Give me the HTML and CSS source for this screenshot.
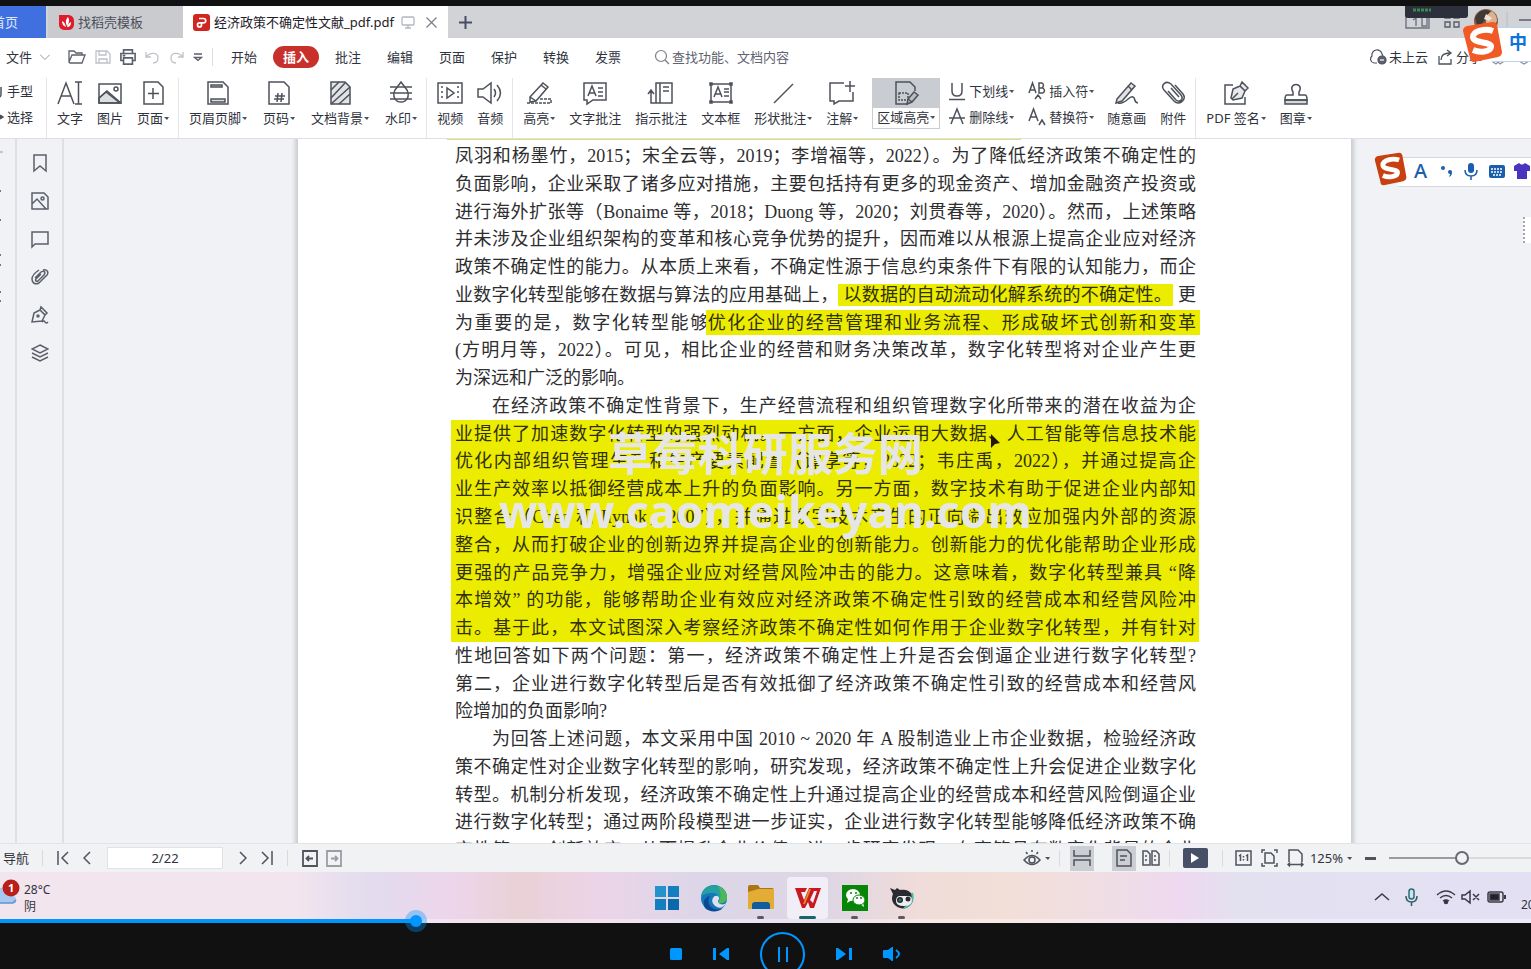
FILE: index.html
```html
<!DOCTYPE html>
<html lang="zh-CN">
<head>
<meta charset="utf-8">
<title>经济政策不确定性文献_pdf.pdf</title>
<link rel="stylesheet" href="styles.css">
</head>
<body>
<div class="player">
  <div class="screen">
    <header class="tabbar">
      <button class="tab tab-home">首页</button>
      <button class="tab tab-tpl">
        <svg width="17" height="17" viewBox="0 0 17 17"><path d="M1 1h10a6 6 0 0 1 5 6v4a6 6 0 0 1-5 5H6a5 5 0 0 1-5-5z" fill="#e01b2c"/><path d="M8 13C5 12 4 10 4 7c2 1 3 2 4 6zM9 12C7 8 8 5 10 3c2 3 1 6-1 9zM9 13c1-3 2-4 4-5 0 3-1 5-4 5z" fill="#fff"/></svg>
        <span>找稻壳模板</span>
      </button>
      <button class="tab tab-doc">
        <svg width="17" height="17" viewBox="0 0 17 17"><rect width="17" height="17" rx="3" fill="#d1251f"/><path d="M6 4.500h4.500a2.200 2.200 0 0 1 0 4.400H6.500a2 2 0 1 0 2 2V8.900" fill="none" stroke="#fff" stroke-width="1.700"/></svg>
        <span class="doc-name">经济政策不确定性文献_pdf.pdf</span>
        <svg class="tab-screen" width="14" height="14" viewBox="0 0 14 14" fill="none" stroke="#b4b6c0" stroke-width="1.300"><rect x="1" y="2" width="12" height="8" rx="1"/><path d="M7 10v2.500M4 13h6"/></svg>
        <svg width="13" height="13" viewBox="0 0 13 13" stroke="#7b7d88" stroke-width="1.200"><path d="M1.500 1.500l10 10M11.500 1.500l-10 10"/></svg>
      </button>
      <button class="tab-add" aria-label="新建"><svg width="13" height="13" viewBox="0 0 13 13" stroke="#484d63" stroke-width="2"><path d="M6.500 0v13M0 6.500h13"/></svg></button>
      <div class="window-tools">
        <svg width="127" height="31" viewBox="0 0 127 31" fill="none">
          <path d="M2 10v12h23V10M12 12v8M9 14l3-2M18 11h5v9h-5z" stroke="#70737e" stroke-width="1.400"/>
          <path d="M41 7h5v5h-5zM50 7h5v5h-5zM41 16h5v5h-5zM50 16h5v5h-5z" stroke="#5a5e6c" stroke-width="1.400"/>
          <path d="M1 0h63v9q0 3-3 3H4q-3 0-3-3z" fill="#2b303c"/><path d="M9 4h18" stroke="#3b8a4c" stroke-width="3" stroke-dasharray="3 1"/>
          <circle cx="82" cy="15" r="12" fill="#8a5b3e"/><path d="M71 12q5-11 15-7l-4 8-8 9z" fill="#3f3a36"/><path d="M82 10l6-5q5 4 5 10l-5 7-6-4z" fill="#d9b391"/><path d="M82 8l6 4-3 3-5-2z" fill="#f1e3d6"/>
          <path d="M103 6v18" stroke="#b9bbc0"/><path d="M115 14h12" stroke="#5a5e6c" stroke-width="1.500"/>
        </svg>
      </div>
    </header>

    <nav class="menubar">
      <button class="menu-file">文件<svg width="10" height="6" viewBox="0 0 10 6" fill="none" stroke="#999"><path d="M0 .5l5 5 5-5"/></svg></button>
      <div class="quick">
        <svg width="18" height="18" viewBox="0 0 18 18"><path d="M1 14V3h5l2 2h6v2M1 14L4 7h13l-3 8H2z"/></svg>
        <svg class="dim" width="16" height="18" viewBox="0 0 16 18"><path d="M1 3h11l3 3v9H1zM4 3v4h7V3M4 15v-4h8v4"/></svg>
        <svg class="print" width="16" height="18" viewBox="0 0 18 18"><path d="M4 5V1h10v4M4 13H1V5h16v8h-3M4 10h10v7H4zM3 7.500h3"/></svg>
        <svg class="dim" width="15" height="18" viewBox="0 0 15 18"><path d="M1 4v5h5M1 9c4-5 12-5 12 1 0 3-2 5-5 5"/></svg>
        <svg class="dim" width="15" height="18" viewBox="0 0 15 18"><path d="M14 4v5H9M14 9C10 4 2 4 2 10c0 3 2 5 5 5"/></svg>
        <svg width="10" height="18" viewBox="0 0 10 18"><path d="M1 6h8M1.500 9.500L5 12.500l3.500-3z"/></svg>
      </div>
      <div class="menu-tabs">
        <button>开始</button><button class="active"><span>插入</span></button><button>批注</button><button>编辑</button><button>页面</button><button>保护</button><button>转换</button><button>发票</button>
      </div>
      <label class="search"><svg width="16" height="16" viewBox="0 0 16 16" fill="none" stroke="#7b7e8a" stroke-width="1.200"><circle cx="7" cy="7" r="5.500"/><path d="M11 11l4 4"/></svg><input type="text" placeholder="查找功能、文档内容" aria-label="查找功能、文档内容"></label>
      <div class="menu-right">
        <button><svg width="18" height="16" viewBox="0 0 18 16" fill="none" stroke="#4d515d" stroke-width="1.200"><path d="M8 14H5A4 4 0 0 1 3 7a5 5 0 0 1 10-2l1 2"/><circle cx="13" cy="11" r="4" fill="#5d6270"/><path d="M11 11h4" stroke="#fff"/></svg>未上云</button>
        <button><svg width="17" height="16" viewBox="0 0 17 16" fill="none" stroke="#4d515d" stroke-width="1.300"><path d="M2 7v8h12v-5M4 11c0-5 3-7 9-7M10 1l4 3-4 3"/></svg>分享</button>
        <svg width="40" height="16" viewBox="0 0 40 16" fill="none" stroke="#8c909b" stroke-width="1.200"><path d="M3 10l-1 3 3 2 2-2 2 2 3-2-1-3M28 10v2l5 3 5-3"/></svg>
      </div>
    </nav>

    <section class="ribbon">
      <div class="col col-first">
        <button><svg width="6" height="14" viewBox="0 0 6 14"><path d="M1 3v7q0 2-1 3"/></svg>手型</button>
        <button><svg width="6" height="14" viewBox="0 0 6 14"><path d="M0 5l3 2-3 2" fill="#444"/></svg>选择</button>
      </div>
      <i class="sep"></i>
      <div class="group">
        <button class="tool"><svg viewBox="0 0 28 28"><path d="M2 25L10 4l8 21M5 17h10M19 3h7M19 25h7M22.500 3v22"/></svg><span>文字</span></button>
        <button class="tool"><svg viewBox="0 0 28 28"><path d="M3 19l7-6 14 11H3z" fill="#dcdee2"/><path d="M3 5h22v19H3zM3 19l8-7 14 12"/><circle cx="20" cy="10" r="2"/></svg><span>图片</span></button>
        <button class="tool"><svg viewBox="0 0 28 28"><path d="M5 3h14l5 5v17H5zM14 9v11M9 14.500h11"/></svg><span class="more">页面</span></button>
      </div>
      <i class="sep"></i>
      <div class="group group-wide">
        <button class="tool"><svg viewBox="0 0 28 28"><path d="M4 3h15l5 5v17H4z"/><path d="M7 6h11v2H7zM7 20h14v3H7z" fill="#dcdee2"/></svg><span class="more">页眉页脚</span></button>
        <button class="tool"><svg viewBox="0 0 28 28"><path d="M4 3h15l5 5v17H4zM10 17h10M9 20h10M13 14l-1 9M17 14l-1 9"/></svg><span class="more">页码</span></button>
        <button class="tool"><svg viewBox="0 0 28 28"><path d="M5 3h14l5 5v17H5z" fill="#e1e3e6"/><path d="M5 11l8-8M5 19L19 4M5 25L24 8M13 25l11-10"/></svg><span class="more">文档背景</span></button>
        <button class="tool"><svg viewBox="0 0 28 28"><path d="M14 3l6 8c3 6 0 12-6 12s-9-6-6-12z"/><path d="M3 8h22M3 14h22M3 20h22" /></svg><span class="more">水印</span></button>
      </div>
      <i class="sep"></i>
      <div class="group">
        <button class="tool"><svg viewBox="0 0 28 28"><path d="M2 4h24v20H2zM11 9v10l7-5z"/><path d="M6 7v15M22 7v15" stroke-dasharray="2 3"/></svg><span>视频</span></button>
        <button class="tool"><svg viewBox="0 0 28 28"><path d="M2 10h5l8-6v20l-8-6H2zM18 10q3 4 0 8M21 6q7 8 0 16"/></svg><span>音频</span></button>
      </div>
      <i class="sep"></i>
      <div class="group">
        <button class="tool"><svg viewBox="0 0 28 28"><path d="M5 18L18 4l5 4-12 14-6 1zM5 18l6 4M16 6l5 4"/><path d="M2 24h24v-4H14" stroke-dasharray="3 1"/></svg><span class="more">高亮</span></button>
        <button class="tool"><svg viewBox="0 0 28 28"><path d="M3 4h22v17H12l-6 4v-4H3zM7 17l4-10 4 10M8 14h6M17 9h5M17 13h5M17 17h5"/></svg><span>文字批注</span></button>
        <button class="tool"><svg viewBox="0 0 28 28"><path d="M9 4h16v20H9zM13 4v20M16 8h6M16 12h6M9 24H4V12M1 15l3-4 3 4"/></svg><span>指示批注</span></button>
        <button class="tool"><svg viewBox="0 0 28 28"><path d="M4 5h20v18H4zM7 18l4-10 4 10M8 15h6M17 10h5M17 13h5M17 17h5"/><path d="M3 4h2v2H3zM23 4h2v2h-2zM3 22h2v2H3zM23 22h2v2h-2z" fill="#555"/></svg><span>文本框</span></button>
        <button class="tool"><svg viewBox="0 0 28 28"><path d="M5 24L24 5"/></svg><span class="more">形状批注</span></button>
        <button class="tool"><svg viewBox="0 0 28 28"><path d="M16 4H2v18h4v3l5-3h14v-9M22 2v11M17 7h10"/></svg><span class="more">注解</span></button>
        <button class="tool tool-on"><svg viewBox="0 0 28 28"><path d="M16 25H4V3h14l5 5v4"/><path d="M7 14h9v7H7z" stroke-dasharray="2 1"/><path d="M16 20l6-7 4 3-6 7-5 2zM16 20l4 3" fill="#b9bdc4"/></svg><span class="more">区域高亮</span></button>
      </div>
      <div class="col">
        <button><svg width="18" height="20" viewBox="0 0 18 20"><path d="M4 2v8q0 5 5 5t5-5V2M1 18.500h16"/></svg><span class="more">下划线</span></button>
        <button><svg width="18" height="20" viewBox="0 0 18 20"><path d="M3 17L9 2l6 15M1 11h16"/></svg><span class="more">删除线</span></button>
      </div>
      <div class="col">
        <button><svg width="18" height="20" viewBox="0 0 18 20"><path d="M1 12L4.500 2 8 12M2 9h5M11 2h3q3 2 0 5h-3zM11 7h4q3 3 0 5h-4zM7 18l3-4 3 4"/></svg><span class="more">插入符</span></button>
        <button><svg width="18" height="20" viewBox="0 0 18 20"><path d="M1 14L5.500 2 10 14M2.500 10h6M11 18l3-5 3 5"/></svg><span class="more">替换符</span></button>
      </div>
      <div class="group">
        <button class="tool"><svg viewBox="0 0 28 28"><path d="M4 20L18 4l4 3L9 22l-6 2z" fill="#e1e3e6"/><path d="M15 7l4 4M5 24c8 2 11-8 15-6 3 1 0 5 5 6"/></svg><span>随意画</span></button>
        <button class="tool"><svg viewBox="0 0 28 28"><path d="M9 12l8 9c4 3 8-1 5-5L12 5C7 1 1 6 5 11l10 11c5 5 13-1 9-7L16 6M12 9l8 9"/></svg><span>附件</span></button>
      </div>
      <i class="sep"></i>
      <div class="group">
        <button class="tool"><svg viewBox="0 0 28 28"><path d="M11 6H3v19h20v-7"/><path d="M9 19l2-9 7-3 5 5-3 7-9 2zM10 20l6-6M18 7l2-4 6 6-3 3" fill="#e7e9ec"/></svg><span class="more">PDF 签名</span></button>
        <button class="tool"><svg viewBox="0 0 28 28"><path d="M3 21h22v4H3z" fill="#d5d8dc"/><path d="M11 13c-6-10 12-10 6 0v3h6q2 0 2 5H3q0-5 2-5h6z"/></svg><span class="more">图章</span></button>
      </div>
    </section>

    <main class="workspace">
      <div class="edge"><svg width="4" height="170" viewBox="0 0 4 170" stroke="#777" stroke-width="2"><path d="M0 13h3" stroke="#c4c6ca"/><path d="M0 52h1M0 81h1M0 116h1M0 126h1M0 153h1M0 162h1"/></svg></div>
      <aside class="sidebar">
        <button aria-label="书签"><svg viewBox="0 0 18 18"><path d="M3 1h12v16l-6-5-6 5z"/></svg></button>
        <button aria-label="缩略图"><svg viewBox="0 0 18 18"><path d="M1 1h12l4 4v12H1zM1 12l5-5 9 10"/><circle cx="11.500" cy="6.500" r="1.500"/></svg></button>
        <button aria-label="批注"><svg viewBox="0 0 18 18"><path d="M1 2h16v12H4l-3 3z"/></svg></button>
        <button aria-label="附件"><svg viewBox="0 0 18 18"><path d="M4 10l6-6c3-2 5 0 3 3l-6 6c-2 1-3-1-2-2l5-5M8 2C5 4 1 8 1 11c0 4 3 6 7 4l8-8c2-3 0-6-4-5"/></svg></button>
        <button aria-label="签名"><svg viewBox="0 0 18 18"><path d="M1 16L3 7l6-3 5 5-3 6zM9 4l1-3 6 6-2 2M11 16q2-2 3 0t3 0"/><circle cx="7" cy="10" r="1"/></svg></button>
        <button aria-label="图层"><svg viewBox="0 0 18 18"><path d="M9 1l8 4-8 4-8-4zM1 9l8 4 8-4M1 13l8 4 8-4"/></svg></button>
      </aside>
      <div class="canvas">
        <article class="page">
          <p>凤羽和杨墨竹，2015；宋全云等，2019；李增福等，2022）。为了降低经济政策不确定性的</p>
          <p>负面影响，企业采取了诸多应对措施，主要包括持有更多的现金资产、增加金融资产投资或</p>
          <p>进行海外扩张等（Bonaime 等，2018；Duong 等，2020；刘贯春等，2020）。然而，上述策略</p>
          <p>并未涉及企业组织架构的变革和核心竞争优势的提升，因而难以从根源上提高企业应对经济</p>
          <p>政策不确定性的能力。从本质上来看，不确定性源于信息约束条件下有限的认知能力，而企</p>
          <p>业数字化转型能够在数据与算法的应用基础上，<mark>以数据的自动流动化解系统的不确定性。</mark>更</p>
          <p>为重要的是，数字化转型能够<mark class="wide">优化企业的经营管理和业务流程、形成破坏式创新和变革</mark></p>
          <p>(方明月等，2022）。可见，相比企业的经营和财务决策改革，数字化转型将对企业产生更</p>
          <p class="last">为深远和广泛的影响。</p>
          <p class="first">在经济政策不确定性背景下，生产经营流程和组织管理数字化所带来的潜在收益为企</p>
          <p class="lit">业提供了加速数字化转型的强烈动机。一方面，企业运用大数据、人工智能等信息技术能</p>
          <p class="lit">优化内部组织管理生产和生产要素配置（谭享等，2022；韦庄禹，2022），并通过提高企</p>
          <p class="lit">业生产效率以抵御经营成本上升的负面影响。另一方面，数字技术有助于促进企业内部知</p>
          <p class="lit">识整合（Chen 和 Ilynak，2007），并通过数字技术产生的正向溢出效应加强内外部的资源</p>
          <p class="lit">整合，从而打破企业的创新边界并提高企业的创新能力。创新能力的优化能帮助企业形成</p>
          <p class="lit">更强的产品竞争力，增强企业应对经营风险冲击的能力。这意味着，数字化转型兼具 “降</p>
          <p class="lit">本增效” 的功能，能够帮助企业有效应对经济政策不确定性引致的经营成本和经营风险冲</p>
          <p class="lit">击。基于此，本文试图深入考察经济政策不确定性如何作用于企业数字化转型，并有针对</p>
          <p>性地回答如下两个问题：第一，经济政策不确定性上升是否会倒逼企业进行数字化转型?</p>
          <p>第二，企业进行数字化转型后是否有效抵御了经济政策不确定性引致的经营成本和经营风</p>
          <p class="last">险增加的负面影响?</p>
          <p class="first">为回答上述问题，本文采用中国 2010 ~ 2020 年 A 股制造业上市企业数据，检验经济政</p>
          <p>策不确定性对企业数字化转型的影响，研究发现，经济政策不确定性上升会促进企业数字化</p>
          <p>转型。机制分析发现，经济政策不确定性上升通过提高企业的经营成本和经营风险倒逼企业</p>
          <p>进行数字化转型；通过两阶段模型进一步证实，企业进行数字化转型能够降低经济政策不确</p>
          <p>定性第二，创新效应，从而提升企业价值。进一步研究发现，在高管具有数字化背景的企业</p>
        </article>
      </div>
      <div class="handle"></div>
    </main>

    <footer class="status">
      <div class="status-left">
        <span class="nav-label">导航</span><i class="sep"></i>
        <button aria-label="首页"><svg width="12" height="14" viewBox="0 0 12 14"><path d="M1 0v14M11 1L5 7l6 6"/></svg></button>
        <button aria-label="上一页"><svg width="8" height="14" viewBox="0 0 8 14"><path d="M7 1L1 7l6 6"/></svg></button>
        <input class="page-no" type="text" value="2/22" aria-label="页码">
        <button aria-label="下一页"><svg width="8" height="14" viewBox="0 0 8 14"><path d="M1 1l6 6-6 6"/></svg></button>
        <button aria-label="末页"><svg width="12" height="14" viewBox="0 0 12 14"><path d="M11 0v14M1 1l6 6-6 6"/></svg></button>
        <i class="sep"></i>
        <button class="back" aria-label="后退"><svg width="16" height="17" viewBox="0 0 16 17"><path d="M1 1h14v15H1zM5 8.500h6M7 6L4.500 8.500 7 11"/></svg></button>
        <button class="back dim" aria-label="前进"><svg width="16" height="17" viewBox="0 0 16 17"><path d="M1 1h14v15H1zM5 8.500h6M9 6l2.500 2.500L9 11"/></svg></button>
      </div>
      <div class="status-right">
        <button class="more" aria-label="护眼"><svg width="18" height="18" viewBox="0 0 18 18"><path d="M1 11q8-9 16 0-8 9-16 0zM9 1v2M3 3l1.500 2M15 3l-1.500 2"/><circle cx="9" cy="11" r="3"/></svg></button>
        <i class="sep"></i>
        <button class="on" aria-label="连续"><svg width="18" height="16" viewBox="0 0 18 16"><path d="M1 0v6h16V0M1 16v-6h16v6"/></svg></button>
        <button class="on pushed" aria-label="单页"><svg width="16" height="18" viewBox="0 0 16 18"><path d="M1 1h10l4 4v12H1zM4 7h7M4 11h5"/></svg></button>
        <button aria-label="双页"><svg width="18" height="18" viewBox="0 0 18 18"><path d="M1 2h4l3 3v11H1zM10 2h4l3 3v11h-7zM3 7h2M3 11h2M12 7h2M12 11h2"/></svg></button>
        <i class="sep"></i>
        <button class="play" aria-label="放映"><svg width="8" height="10" viewBox="0 0 8 10"><path class="play-mark" d="M0 0l8 5-8 5z"/></svg></button>
        <i class="sep"></i>
        <button class="fit" aria-label="实际大小"><svg width="17" height="16" viewBox="0 0 17 16"><path d="M1 1h15v14H1zM4 6l1.500-1v6M11 6l1.500-1v6M8.500 6v1.500M8.500 9v1.500"/></svg></button>
        <button class="fit" aria-label="适合页面"><svg width="17" height="18" viewBox="0 0 17 18"><path d="M4 4h6l3 3v7H4zM1 4V1h3M13 1h3v3M1 14v3h3M13 17h3v-3"/></svg></button>
        <button class="fit" aria-label="适合宽度"><svg width="17" height="18" viewBox="0 0 17 18"><path d="M2 13V1h9l4 4v8M1 15.500h15M3 13.500l-2 2 2 2M14 13.500l2 2-2 2"/></svg></button>
        <button class="more percent">125%</button>
        <button class="minus" aria-label="缩小"><svg width="11" height="3" viewBox="0 0 11 3"><path d="M0 1.500h11" stroke-width="3"/></svg></button>
        <input class="zoom" type="range" min="0" max="100" value="50" aria-label="缩放">
      </div>
    </footer>

    <div class="taskbar">
      <div class="weather">
        <svg width="20" height="30" viewBox="0 0 20 30"><path d="M0 10q8-2 12 7 5 1 4 8H0z" fill="#a9c8ef"/><path d="M0 25h13l3-3" stroke="#5d93d4" stroke-width="1.500" fill="none"/><circle cx="11" cy="10" r="8.500" fill="#b8201c"/><text x="8" y="14" class="badge">1</text></svg>
        <div>28°C<br>阴</div>
      </div>
      <div class="apps">
        <button aria-label="开始"><svg width="28" height="28" viewBox="0 0 28 28"><path d="M2 2h11v11H2z" fill="#2493cb"/><path d="M15 2h11v11H15zM2 15h11v11H2z" fill="#147fbf"/><path d="M15 15h11v11H15z" fill="#0869ad"/></svg></button>
        <button aria-label="Edge"><svg width="28" height="28" viewBox="0 0 28 28"><circle cx="14" cy="14" r="13" fill="#1477bd"/><path d="M1 13C3-3 25-2 27 13c0 5-4 7-9 6 2-4 1-10-5-10-7 0-11 2-12 4z" fill="#24a0a0"/><path d="M18 2c5 2 9 6 9 11 0 5-4 7-9 6 4-6 3-11 0-17z" fill="#4db85a"/><path d="M10 12c-5 8 3 17 13 12-4 4-13 5-18 0C2 18 5 13 10 12z" fill="#0a4a91"/><path d="M13 14c2-4 7-2 6 1-1 2-2 3 1 5 3 1 6 0 7-2-3 5-7 7-10 5-4-2-6-6-4-9z" fill="#dfe0ee"/></svg></button>
        <button class="running" aria-label="文件"><svg width="28" height="28" viewBox="0 0 28 28"><path d="M1 3q0-2 2-2h8l2 3h12q2 0 2 2v18H1z" fill="#ad7414"/><path d="M1 8l10-3h16v19q0 1-1 1H2q-1 0-1-1z" fill="#e3ac35"/><path d="M5 25v-4q0-3 3-3h12q3 0 3 3v4z" fill="#115d9c"/></svg></button>
        <button class="running current" aria-label="WPS"><svg width="28" height="28" viewBox="0 0 28 28"><path d="M1 4h12l-2 4H7l3 8 5-12h12l-7 20h-4l-2-6-3 6H8z" fill="#c7191f"/><path d="M16 16l4-9h3l-4 12z" fill="#f2eef8"/><path d="M16 5l-6 15" stroke="#e88725" stroke-width="2"/></svg></button>
        <button class="running" aria-label="微信"><svg width="28" height="28" viewBox="0 0 28 28"><path d="M1 1h26v26H1z" fill="#078507"/><ellipse cx="12" cy="11" rx="7" ry="6" fill="#fff"/><path d="M7 15l-1 4 5-3zM19 20l4 3-1-5z" fill="#fff"/><ellipse cx="18" cy="16" rx="6" ry="5" fill="#fff" stroke="#078507"/><path d="M9 9h2M14 9h2M15 14h2M19 14h2" stroke="#078507" stroke-width="1.500"/></svg></button>
        <button class="running" aria-label="录屏"><svg width="28" height="28" viewBox="0 0 28 28"><path d="M2 4l5 2 2-2 3 2C23 4 27 13 24 19c-3 6-11 7-16 3-4-3-5-8-3-12z" fill="#292b30"/><path d="M24 9q3 11-8 15" stroke="#47b9a4" stroke-width="2" fill="none"/><path d="M8 17q0-5 4-5h8q4 0 4 4 0 6-8 6t-8-5z" fill="#eee"/><circle cx="12" cy="16" r="3" fill="#292b30"/><circle cx="20" cy="15" r="2.500" fill="#292b30"/><circle cx="12" cy="16" r="1.500" fill="#247a70"/></svg></button>
      </div>
      <div class="tray">
        <svg width="135" height="20" viewBox="0 0 135 20" fill="none" stroke="#3a3a45" stroke-width="1.500"><path d="M1 13l7-6 7 6"/><rect x="35" y="2" width="5" height="10" rx="2.500" stroke="#2a6d75" fill="#cfe3ea"/><path d="M32 9q0 6 5.500 6T43 9M37.500 15v4" stroke="#2a5d65"/><path d="M63 8q9-8 18 0M66 11q6-5 12 0M69 14q3-2 6 0" /><circle cx="72" cy="15" r="1.500" fill="#333"/><path d="M88 8h3l5-4v12l-5-4h-3zM99 7l6 6M105 7l-6 6"/><rect x="114" y="5" width="15" height="10" rx="2"/><path d="M116 7h9v6h-9z" fill="#22222a"/><path d="M131 8v4" stroke-width="2"/></svg>
        <span>2022</span>
      </div>
    </div>
    <input class="progress" type="range" min="0" max="100" value="27" style="--played:27%" aria-label="播放进度">
  </div>

  <div class="controls">
    <button aria-label="停止"><svg width="12" height="12" viewBox="0 0 12 12"><rect width="12" height="12" rx="1.500"/></svg></button>
    <button aria-label="上一个"><svg width="16" height="14" viewBox="0 0 16 14"><path d="M0 1h3v12H0zM16 1v12h-2L6 7l8-6z"/></svg></button>
    <button class="pause" aria-label="暂停"><svg width="10" height="15" viewBox="0 0 10 15"><path d="M0 0h2v15H0zM8 0h2v15H8z"/></svg></button>
    <button aria-label="下一个"><svg width="16" height="14" viewBox="0 0 16 14"><path d="M13 1h3v12h-3zM0 1v12h2l8-6-8-6z"/></svg></button>
    <button aria-label="音量"><svg width="18" height="14" viewBox="0 0 18 14"><path d="M0 4q0-1 1-1h4l4-3h1v14H9l-4-3H1q-1 0-1-1z"/><path d="M13 3q6 4 0 8" fill="none" stroke="#0096ff" stroke-width="2"/></svg></button>
  </div>

  <div class="ime ime-top">
    <svg width="42" height="42" viewBox="0 0 42 42"><path d="M5 5L31 1q3 0 4 3l5 27q0 4-4 5l-24 5q-4 0-4-4L1 10q0-4 4-5z" fill="#f15a24"/><path d="M31 10C23 7 11 10 11 16c0 7 19 4 18 10-1 5-11 6-18 3" fill="none" stroke="#fff" stroke-width="6"/></svg>
    <span>中</span>
  </div>
  <div class="ime ime-side">
    <svg width="34" height="34" viewBox="0 0 42 42"><path d="M5 5L31 1q3 0 4 3l5 27q0 4-4 5l-24 5q-4 0-4-4L1 10q0-4 4-5z" fill="#c8400f"/><path d="M31 10C23 7 11 10 11 16c0 7 19 4 18 10-1 5-11 6-18 3" fill="none" stroke="#fff" stroke-width="6"/></svg>
    <span>A</span>
    <svg class="ime-tools" width="92" height="20" viewBox="0 0 92 20" fill="#1a5fae"><circle cx="4" cy="7" r="2"/><circle cx="11" cy="11" r="2"/><path d="M13 11q0 4-3 5l2-5z"/><rect x="29" y="2" width="6" height="10" rx="3"/><path d="M26 9q0 6 6 6t6-6M32 15v4" fill="none" stroke="#1a5fae" stroke-width="1.500"/><rect x="50" y="4" width="16" height="13" rx="2"/><path d="M52 8h12M52 11h12M54 14h8" stroke="#fff" stroke-width="1.500" stroke-dasharray="2 1"/><path d="M75 5l5-3q3 3 6 0l5 3v5h-3v8h-10v-8h-3z" fill="#4b34bd"/></svg>
  </div>
  <svg class="cursor" width="11" height="16" viewBox="0 0 11 16"><path d="M1 0l9 9-5 1-4 4z" fill="#20180c"/></svg>
  <div class="watermark">草莓科研服务网<br>www.caomeikeyan.com</div>
</div>
</body>
</html>
```
FILE: styles.css
```css
* { box-sizing: border-box; }
body {
  margin: 0;
  background: #111;
  overflow: hidden;
  font: 13px/20px "Noto Sans", "Noto Sans CJK SC", sans-serif;
  color: #30333d;
}
button, input {
  font: inherit;
  color: inherit;
  border: 0;
  padding: 0;
  margin: 0;
  background: none;
  white-space: nowrap;
}
svg { display: block; flex: none; }
p { margin: 0; }

.player {
  position: relative;
  height: 100vh;
  display: flex;
  flex-direction: column;
  padding-top: 6px;
  overflow: hidden;
}
.screen {
  position: relative;
  flex: 1;
  min-height: 0;
  display: flex;
  flex-direction: column;
  background: #fff;
}

/* Document tabs */
.tabbar { display: flex; height: 32px; background: #d1d3d6; flex: none; }
.tab { display: flex; align-items: center; gap: 3px; }
.tab-home { width: 46px; background: #4070df; color: #dfe8ff; text-indent: -8px; margin-right: 2px; }
.tab-tpl { width: 135px; padding-left: 10px; background: #c9cbcf; color: #4b4e59; }
.tab-doc { width: 265px; padding: 0 10px; gap: 4px; background: #fff; color: #1e2028; }
.doc-name { flex: 1; text-align: left; }
.tab-screen { margin-right: 6px; }
.tab-add { padding: 0 11px; }
.window-tools { margin-left: auto; }

/* Menu */
.menubar { display: flex; align-items: center; height: 38px; flex: none; overflow: hidden; }
.menu-file { display: flex; align-items: center; gap: 8px; padding-left: 6px; margin-right: 18px; }
.quick { display: flex; align-items: center; gap: 9px; padding-right: 9px; border-right: 1px solid #dcdde0; }
.quick svg { fill: none; stroke: #5c606c; stroke-width: 1.3; }
.quick .dim { stroke: #bfc1c7; }
.quick .print { stroke-width: 1.8; }
.menu-tabs { display: flex; margin-left: 5px; }
.menu-tabs button { width: 52px; }
.menu-tabs .active span { display: block; margin: 0 3px; line-height: 22px; border-radius: 11px; background: #c8302c; color: #fff; font-weight: bold; }
.search { display: flex; align-items: center; gap: 2px; margin-left: 20px; }
.search input { width: 160px; }
.search input::placeholder { color: #5f6370; opacity: 1; }
.menu-right { display: flex; align-items: center; gap: 9px; margin-left: auto; }
.menu-right button { display: flex; align-items: center; gap: 2px; }

/* Ribbon */
.ribbon { display: flex; height: 62px; padding-top: 2px; flex: none; overflow: hidden; }
.sep { flex: none; width: 1px; background: #e4e5e8; }
.ribbon .sep { margin: 0 3px 0 2px; }
.group { display: flex; align-items: flex-start; }
.group-wide { gap: 2px; }
.tool { display: flex; flex-direction: column; align-items: center; padding: 1px 7px 0; }
.tool svg { width: 28px; height: 28px; margin: 0 -1px; }
.tool svg, .col svg { fill: none; stroke: #4d5159; stroke-width: 1.5; }
.tool span { line-height: 22px; }
.more::after {
  content: "";
  display: inline-block;
  margin-left: 1px;
  vertical-align: 3px;
  border: solid transparent;
  border-width: 3px 2px 0 3px;
  border-top-color: #4d515c;
}
.tool-on { margin: 0 7px; padding: 0; width: 68px; border: 1px solid #c9ccd1; background: linear-gradient(#c9ccd1 29px, #fff 29px); }
.tool-on span { line-height: 21px; }
.col { display: flex; flex-direction: column; gap: 6px; padding: 3px 0 0 1px; margin-right: 13px; }
.col button { display: flex; align-items: center; gap: 3px; height: 20px; }
.ribbon .col + .group { margin-left: -7px; }
.col-first { margin-right: 11px; padding-left: 0; }
.col-first button { gap: 1px; }

/* Reading area */
.workspace { position: relative; flex: 1; min-height: 0; display: flex; background: #f0f2f5; border-top: 1px solid #dedfe2; }
.edge { width: 17px; border-right: 2px solid #dfe0e3; }
.sidebar { width: 47px; padding-top: 13px; display: flex; flex-direction: column; align-items: center; gap: 16px; border-right: 2px solid #dfe0e3; }
.sidebar svg { width: 18px; height: 22px; fill: none; stroke: #5c5f69; stroke-width: 1.5; }
.canvas { flex: 1; display: flex; min-width: 0; padding: 0 180px 0 234px; overflow: hidden; }
.page {
  position: relative;
  flex: 1;
  min-width: 0;
  display: grid;
  grid-auto-rows: 1fr;
  padding: 3px 155px 0 157px;
  margin-bottom: -21px;
  background: #fff;
  box-shadow: 0 0 4px 3px #cbccce;
  font: 18px/28px "Liberation Serif", "Noto Sans CJK SC", serif;
  color: #2e2e30;
}
.page::before { content: ""; position: absolute; top: 0; left: 149px; right: 330px; height: 1px; background: #dfe07a; }
.page p { min-height: 0; white-space: nowrap; text-align-last: justify; }
.page .last { text-align-last: left; }
.page .first { padding-left: 37px; }
.page .lit { margin: 0 -3px 0 -4px; padding: 0 3px 0 4px; background: #ecec00; color: #30300a; }
mark { background: #ecec00; color: #30300a; margin: 0 5px 0 0; padding: 1px 1px 1px 5px; }
mark.wide { margin: 0 -4px; padding: 3px 4px 2px 2px; }
.handle { position: absolute; right: 0; top: 78px; width: 8px; height: 26px; border-left: 2px dotted #a5a7ac; background: #fff; }

/* Status bar */
.status { display: flex; justify-content: space-between; height: 29px; flex: none; background: #f0f2f4; overflow: hidden; border-top: 1px solid #e2e3e6; }
.status-left, .status-right { display: flex; align-items: center; }
.status svg { fill: none; stroke: #50535d; stroke-width: 1.5; }
.status .dim svg { stroke: #9b9da4; }
.status .play-mark { fill: #fff; stroke: none; }
.status .sep { height: 16px; background: #d9dade; }
.nav-label { padding: 0 13px 0 3px; }
.status-left { gap: 14px; }
.status-left .nav-label { margin-right: -14px; }
.page-no { width: 116px; height: 22px; background: #fff; border: 1px solid #e1e2e5; text-align: center; margin: 0 2px; }
.back + .back { margin-left: -6px; }
.back svg { stroke-width: 1.8; }
.status-right { gap: 6px; }
.status-right .more { display: flex; align-items: center; gap: 3px; }
.status-right .sep { margin: 0 4px 0 3px; }
.status-right .on { display: grid; place-items: center; width: 24px; height: 25px; background: #cbced3; }
.status-right .pushed { margin-left: 12px; }
.play { display: grid; place-items: center; width: 25px; height: 20px; border-radius: 2px; background: #485068; margin-left: 3px; }
.status-right .play + .sep { margin: 0 6px 0 8px; }
.fit + .fit { margin-left: 3px; }
.percent, .minus { margin-right: 7px; }
.zoom { appearance: none; width: 146px; height: 16px; margin-right: -4px; background: linear-gradient(90deg, #9a9ca2 50%, #d8dade 50%) center / 100% 2px no-repeat; }
.zoom::-webkit-slider-thumb { appearance: none; width: 14px; height: 14px; border: 2px solid #666972; border-radius: 50%; background: #f0f2f4; }

/* Taskbar */
.taskbar {
  display: grid;
  grid-template-columns: 1fr auto 1fr;
  height: 51px;
  flex: none;
  overflow: hidden;
  background: linear-gradient(90deg, #f3e5ee 0 19%, #e2dcee 24%, #ecd6ec 29%, #ead1d6 34%, #ecd4e8 39%, #dcd6e8 46%, #ded6e4 54%, #f0dcd8 60%, #f2dfd8 66%, #efdde6 73%, #eed9f0 77%, #e3e1f0 81%, #e3e0f4);
}
.weather { display: flex; gap: 4px; padding-top: 6px; line-height: 17px; }
.weather div { padding-top: 3px; font-size: 12px; }
.badge { font: bold 11px "Noto Sans", sans-serif; fill: #fff; }
.apps { display: flex; padding-left: 37px; }
.apps button { position: relative; display: grid; place-items: center; width: 41px; height: 42px; margin: 5px 3px 0; border-radius: 4px; }
.apps .current { background: #f2eef8; }
.running::after { content: ""; position: absolute; bottom: 0; left: 17px; width: 7px; height: 3px; border-radius: 2px; background: #5c5665; }
.apps .current::after { left: 12px; width: 17px; background: #17646b; }
.tray { display: flex; justify-content: flex-end; gap: 12px; padding-top: 15px; }
.tray span { width: 10px; padding-top: 8px; font-size: 12px; overflow: hidden; }

/* Player */
.progress {
  appearance: none;
  position: absolute;
  left: 0;
  bottom: 0;
  width: 100%;
  height: 4px;
  background: linear-gradient(90deg, #0096ff var(--played), rgba(255, 255, 255, .35) var(--played));
}
.progress::-webkit-slider-thumb { appearance: none; width: 12px; height: 12px; border-radius: 50%; background: #0096ff; box-shadow: 0 0 0 5px rgba(0, 150, 255, .35); }
.controls { display: flex; justify-content: center; align-items: center; gap: 31px; height: 46px; padding: 16px 0 0 40px; flex: none; background: #111; }
.controls svg { fill: #0096ff; }
.pause { display: grid; place-items: center; flex: none; width: 45px; height: 45px; border: 2px solid #0096ff; border-radius: 50%; }

/* Floating layers */
.ime { position: absolute; z-index: 1; right: 0; display: flex; align-items: center; color: #0b74dd; }
.ime::before { content: ""; position: absolute; z-index: -1; right: 0; background: #fff; border: solid #b9d3f0; border-width: 1px 0; }
.ime-top { top: 21px; gap: 5px; }
.ime-top::before { left: 30px; top: 6px; height: 33px; }
.ime-top span { width: 22px; font-size: 18px; font-weight: bold; }
.ime-side { top: 152px; gap: 6px; color: #1a5fae; }
.ime-side::before { left: 24px; top: 5px; height: 28px; border-color: #d5d7db; }
.ime-side span { font-size: 20px; font-weight: 500; padding-top: 3px; }
.ime-tools { margin: 3px 0 0 6px; }
.cursor { position: absolute; left: 990px; top: 434px; }
.watermark {
  position: absolute;
  left: 0;
  right: 0;
  top: calc(50% - 3px);
  transform: translateY(-50%);
  text-align: center;
  font: bold 45px/57px "Noto Sans", "Noto Sans CJK SC", sans-serif;
  color: #e6e6e6;
  pointer-events: none;
}
```
